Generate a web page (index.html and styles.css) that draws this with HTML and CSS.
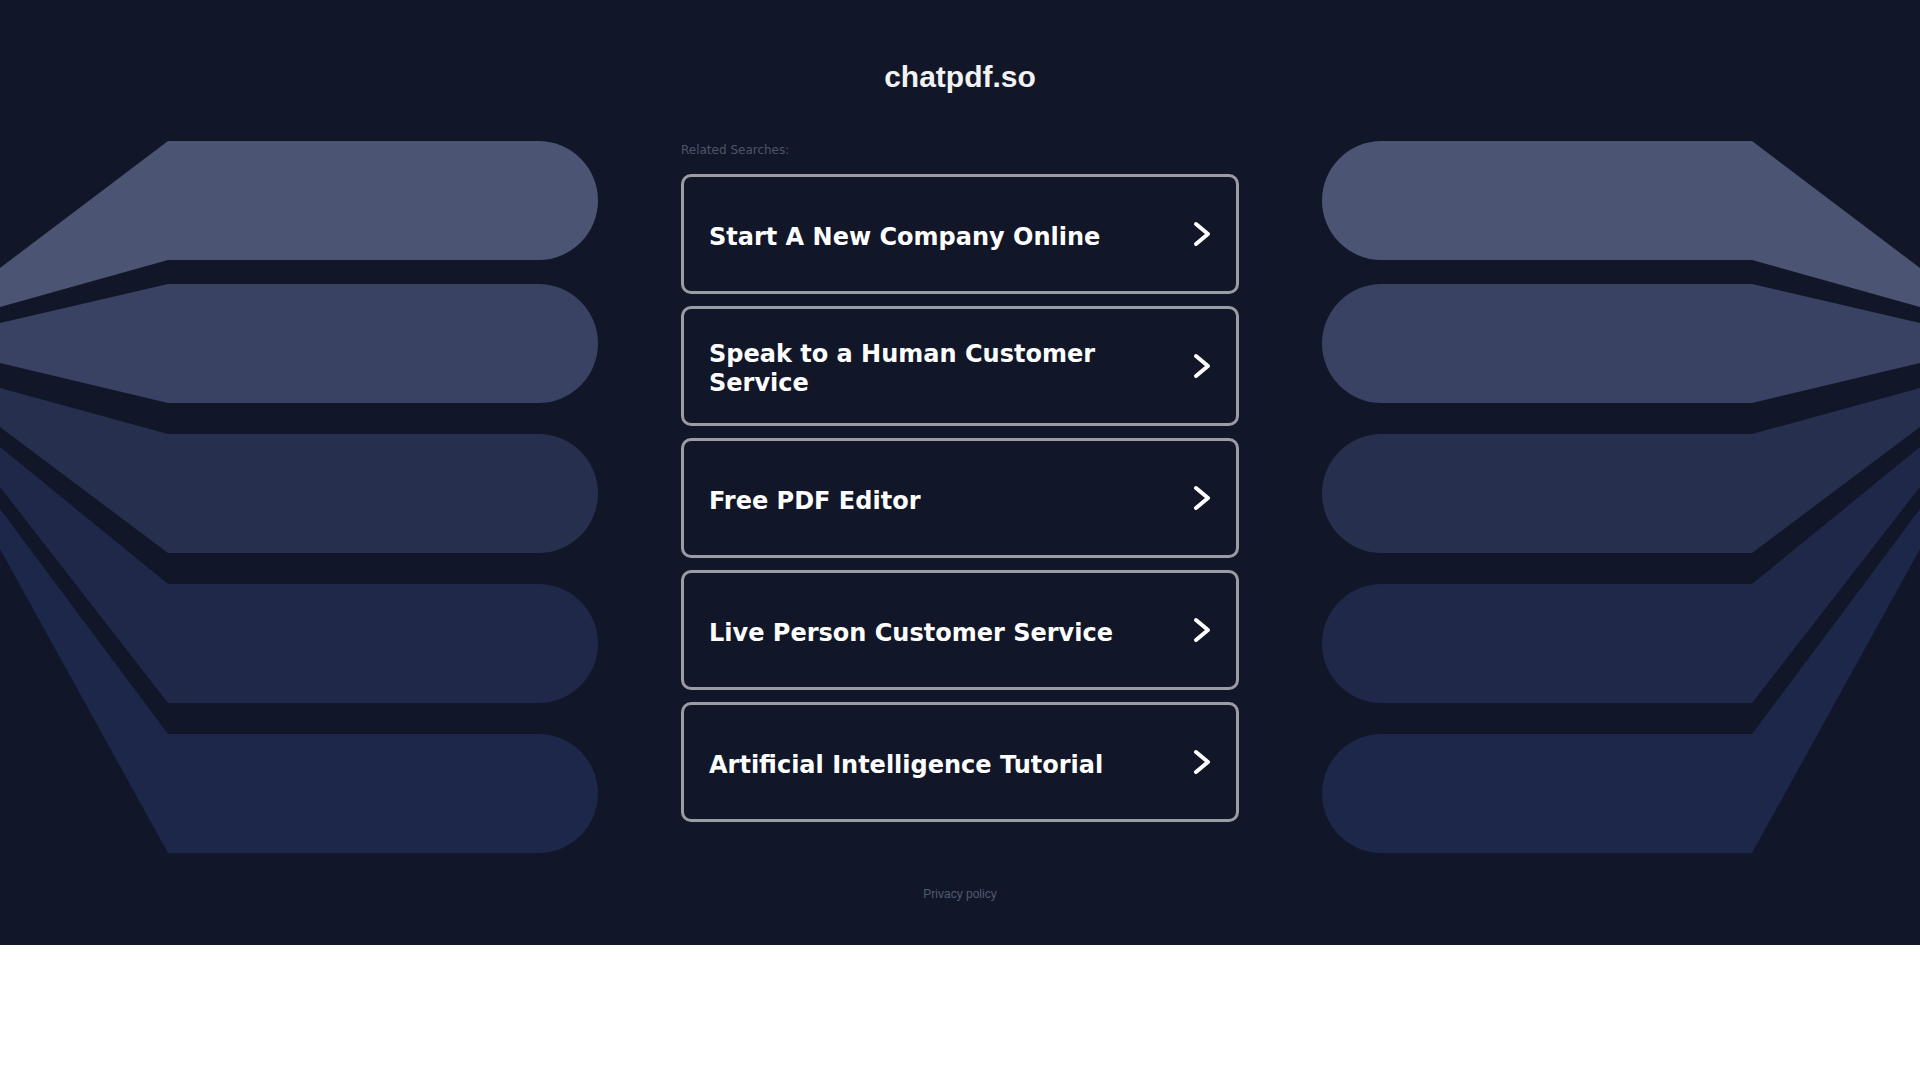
FILE: index.html
```html
<!DOCTYPE html>
<html lang="en">
<head>
    <meta charset="UTF-8">
    <meta name="viewport" content="width=device-width, initial-scale=1.0">
    <title>chatpdf.so</title>
    <link rel="stylesheet" href="styles.css">
</head>
<body>
    <div class="page">
        <!-- left decoration -->
        <svg class="decor" width="598" height="945" viewBox="0 0 598 945" aria-hidden="true">
            <path class="band band-1" d="M0,268 L168,141 L538.5,141 A59.5,59.5 0 0 1 538.5,260 L168,260 L0,307 Z"/>
            <path class="band band-2" d="M0,323 L168,284 L538.5,284 A59.5,59.5 0 0 1 538.5,403 L168,403 L0,363 Z"/>
            <path class="band band-3" d="M0,388 L168,434 L538.5,434 A59.5,59.5 0 0 1 538.5,553 L168,553 L0,427 Z"/>
            <path class="band band-4" d="M0,447 L168,584 L538.5,584 A59.5,59.5 0 0 1 538.5,703 L168,703 L0,487 Z"/>
            <path class="band band-5" d="M0,509 L168,734 L538.5,734 A59.5,59.5 0 0 1 538.5,853 L168,853 L0,549 Z"/>
        </svg>

        <main class="center">
            <h1 class="domain">chatpdf.so</h1>

            <div class="searches">
                <div class="searches-label">Related Searches:</div>

                <a class="search-link" href="#">
                    <span class="search-text">Start A New Company Online</span>
                    <svg class="chevron" width="18" height="26" viewBox="0 0 18 26"><path d="M3,3 L15,13 L3,23"/></svg>
                </a>
                <a class="search-link" href="#">
                    <span class="search-text">Speak to a Human Customer Service</span>
                    <svg class="chevron" width="18" height="26" viewBox="0 0 18 26"><path d="M3,3 L15,13 L3,23"/></svg>
                </a>
                <a class="search-link" href="#">
                    <span class="search-text">Free PDF Editor</span>
                    <svg class="chevron" width="18" height="26" viewBox="0 0 18 26"><path d="M3,3 L15,13 L3,23"/></svg>
                </a>
                <a class="search-link" href="#">
                    <span class="search-text">Live Person Customer Service</span>
                    <svg class="chevron" width="18" height="26" viewBox="0 0 18 26"><path d="M3,3 L15,13 L3,23"/></svg>
                </a>
                <a class="search-link" href="#">
                    <span class="search-text">Artificial Intelligence Tutorial</span>
                    <svg class="chevron" width="18" height="26" viewBox="0 0 18 26"><path d="M3,3 L15,13 L3,23"/></svg>
                </a>
            </div>

            <a class="privacy" href="#">Privacy policy</a>
        </main>

        <!-- right decoration, same shapes mirrored -->
        <svg class="decor decor-right" width="598" height="945" viewBox="0 0 598 945" aria-hidden="true">
            <path class="band band-1" d="M0,268 L168,141 L538.5,141 A59.5,59.5 0 0 1 538.5,260 L168,260 L0,307 Z"/>
            <path class="band band-2" d="M0,323 L168,284 L538.5,284 A59.5,59.5 0 0 1 538.5,403 L168,403 L0,363 Z"/>
            <path class="band band-3" d="M0,388 L168,434 L538.5,434 A59.5,59.5 0 0 1 538.5,553 L168,553 L0,427 Z"/>
            <path class="band band-4" d="M0,447 L168,584 L538.5,584 A59.5,59.5 0 0 1 538.5,703 L168,703 L0,487 Z"/>
            <path class="band band-5" d="M0,509 L168,734 L538.5,734 A59.5,59.5 0 0 1 538.5,853 L168,853 L0,549 Z"/>
        </svg>
    </div>
</body>
</html>
```

FILE: styles.css
```css
* {
    margin: 0;
    padding: 0;
    box-sizing: border-box;
}

body {
    background: #ffffff;
    font-family: 'DejaVu Sans', Verdana, sans-serif;
}

.page {
    display: flex;
    justify-content: center;
    height: 945px;
    background: #111729;
    overflow: hidden;
}

.decor {
    flex: 0 0 598px;
    display: block;
}

.decor-right {
    transform: scaleX(-1);
}

.band-1 { fill: #4b5573; }
.band-2 { fill: #394262; }
.band-3 { fill: #272f4e; }
.band-4 { fill: #1f2849; }
.band-5 { fill: #1c274a; }

.center {
    flex: 0 0 724px;
    display: flex;
    flex-direction: column;
    align-items: center;
    padding-top: 59px;
}

.domain {
    font-family: 'Liberation Sans', Arial, sans-serif;
    font-size: 30px;
    line-height: 36px;
    font-weight: 700;
    color: #f2f2f2;
}

.searches {
    width: 558px;
    margin-top: 47px;
}

.searches-label {
    font-size: 12px;
    line-height: 16px;
    color: #4d5569;
    margin-bottom: 16px;
}

.search-link {
    display: flex;
    align-items: center;
    height: 120px;
    margin-bottom: 12px;
    padding: 0 25px;
    border: 3px solid #9b9ca4;
    border-radius: 10px;
    color: #ffffff;
    text-decoration: none;
}

.search-text {
    flex: 1;
    padding-top: 6px;
    font-size: 24px;
    font-weight: 700;
    line-height: 29px;
}

.chevron {
    flex: 0 0 18px;
    margin-left: 20px;
}

.chevron path {
    fill: none;
    stroke: #ffffff;
    stroke-width: 4;
    stroke-linecap: round;
    stroke-linejoin: round;
}

.privacy {
    margin-top: 52px;
    font-family: 'Liberation Sans', Arial, sans-serif;
    font-size: 12px;
    line-height: 16px;
    color: #535b6f;
    text-decoration: none;
}
```
